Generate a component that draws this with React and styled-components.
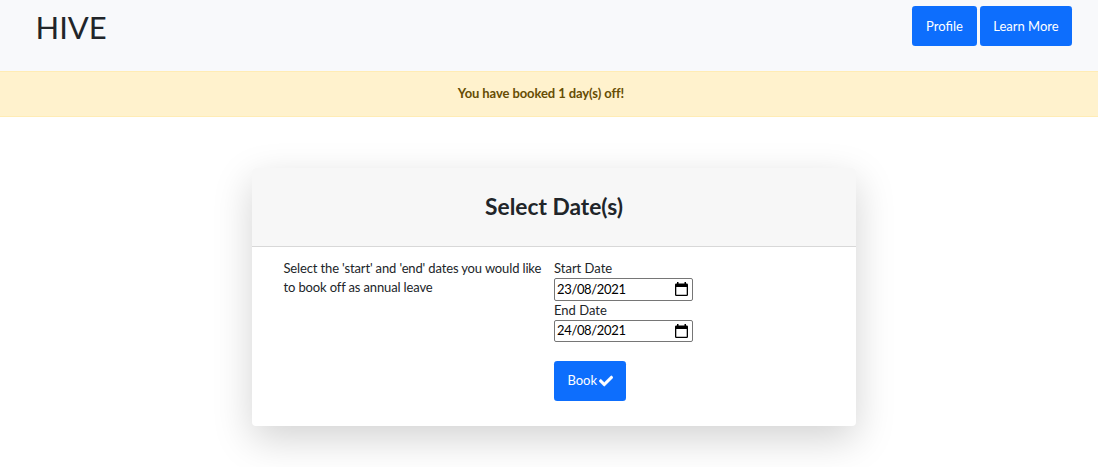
import React from "react";
import styled, { createGlobalStyle } from "styled-components";

const GlobalStyle = createGlobalStyle`
  *, *::before, *::after { box-sizing: border-box; }
  body {
    display: flow-root;
    min-height: 100vh;
    margin: 0;
    overflow: hidden;
    background: #fff;
    color: #212529;
    font: 400 13px/19.5px Lato, sans-serif;
  }
`;

const Header = styled.header`
  display: flex;
  justify-content: space-between;
  align-items: flex-start;
  height: 71px;
  padding: 6px 26px 0 35.5px;
  background: #f8f9fb;
`;

const Brand = styled.div`
  font-size: 31px;
  line-height: 42px;
`;

const Nav = styled.nav`
  display: flex;
  gap: 3px;
`;

const Button = styled.button`
  display: flex;
  align-items: center;
  justify-content: center;
  gap: 1.5px;
  width: ${(p) => p.$width}px;
  height: 40px;
  padding: ${(p) => p.$drop || 0}px 0 0;
  border: 0;
  border-radius: 3.25px;
  background: #0d6efd;
  color: #fff;
  font: inherit;
`;

const Alert = styled.div`
  height: 46px;
  padding: 12px 16px 0 0;
  border: solid #ffecb5;
  border-width: 1px 0;
  background: #fff2cd;
  color: #664d03;
  font-weight: 700;
  letter-spacing: -0.09px;
  text-align: center;
`;

const Card = styled.main`
  width: 604px;
  height: 258px;
  margin: 51px 0 0 252px;
  border-radius: 4px;
  background: #fff;
  box-shadow: 0 13px 39px rgba(0, 0, 0, 0.175);
`;

const CardHeader = styled.div`
  height: 79px;
  padding-top: 25px;
  border-bottom: 1px solid #d8d8d8;
  border-radius: 4px 4px 0 0;
  background: #f7f7f7;
`;

const Title = styled.h1`
  margin: 0;
  font-size: 22.75px;
  line-height: 28px;
  font-weight: 700;
  text-align: center;
`;

const CardBody = styled.div`
  display: grid;
  grid-template-columns: 270.5px 1fr;
  padding: 12px 0 0 31.5px;
`;

const Description = styled.p`
  margin: 0;
  line-height: 19px;
  letter-spacing: -0.14px;
`;

const Form = styled.form`
  display: flex;
  flex-direction: column;
  align-items: flex-start;
`;

const Label = styled.label`
  height: 19px;
`;

const DateField = styled.div`
  display: flex;
  align-items: center;
  justify-content: space-between;
  width: 139px;
  height: ${(p) => p.$height}px;
  padding: 0 4px 0 2px;
  border: 1px solid #767676;
  border-radius: 2px;
  color: #000;
  letter-spacing: -0.35px;
`;

const Actions = styled.div`
  margin-top: 19px;
`;

const CalendarIcon = () => (
  <svg width="13" height="15" viewBox="0 0 13 15" fill="#000">
    <path fillRule="evenodd" d="M2 0h1.500v1.500h6V0H11v1.500h.7q1.300 0 1.300 1.300v9.900q0 1.300-1.300 1.300H1.300Q0 14 0 12.700V2.800Q0 1.500 1.300 1.500H2zM1.300 5v7.700h10.400V5z" />
  </svg>
);

const CheckIcon = () => (
  <svg width="14" height="14" viewBox="0 0 512 512" fill="currentColor" stroke="currentColor" strokeWidth="14">
    <path d="M173.898 439.404l-166.400-166.400c-9.997-9.997-9.997-26.206 0-36.204l36.203-36.204c9.997-9.998 26.207-9.998 36.204 0L192 312.690 432.095 72.596c9.997-9.997 26.207-9.997 36.204 0l36.203 36.204c9.997 9.997 9.997 26.206 0 36.204l-294.400 294.401c-9.998 9.997-26.207 9.997-36.204-.001z" />
  </svg>
);

export default function App() {
  return (
    <>
      <GlobalStyle />
      <Header>
        <Brand>HIVE</Brand>
        <Nav>
          <Button $width={65} $drop={2}>Profile</Button>
          <Button $width={92} $drop={2}>Learn More</Button>
        </Nav>
      </Header>
      <Alert>You have booked 1 day(s) off!</Alert>
      <Card>
        <CardHeader>
          <Title>Select Date(s)</Title>
        </CardHeader>
        <CardBody>
          <Description>
            Select the 'start' and 'end' dates you would like
            <br />
            to book off as annual leave
          </Description>
          <Form>
            <Label>Start Date</Label>
            <DateField $height={23}>
              23/08/2021
              <CalendarIcon />
            </DateField>
            <Label>End Date</Label>
            <DateField $height={22}>
              24/08/2021
              <CalendarIcon />
            </DateField>
            <Actions>
              <Button type="button" $width={72}>
                Book
                <CheckIcon />
              </Button>
            </Actions>
          </Form>
        </CardBody>
      </Card>
    </>
  );
}
